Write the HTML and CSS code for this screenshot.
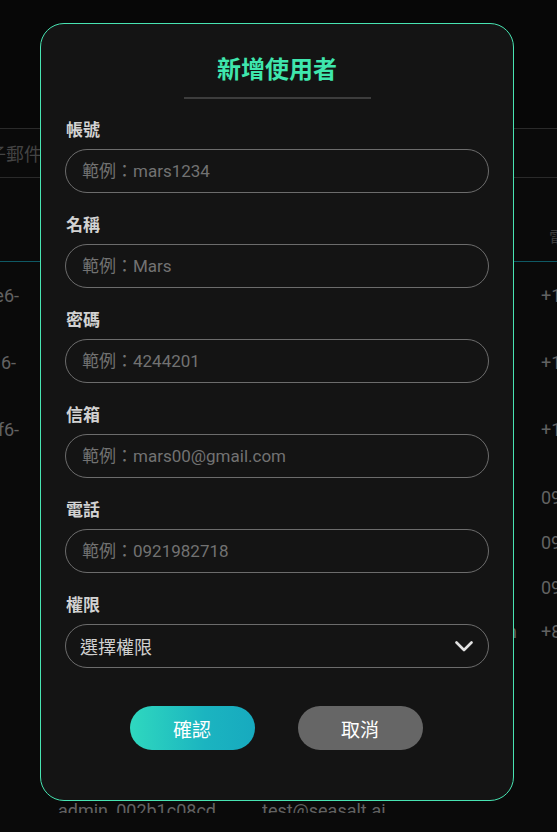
FILE: index.html
```html
<!DOCTYPE html>
<html lang="zh-Hant">
<head>
<meta charset="utf-8">
<title>新增使用者</title>
<link rel="stylesheet" href="styles.css">
</head>
<body>
<div class="page">
  <div class="topbar"></div>
  <div class="search"><span class="search-text">電子郵件</span></div>
  <div class="table">
    <div class="thead">
      <div class="cell"></div>
      <div class="cell">名稱</div>
      <div class="cell">電子郵件</div>
      <div class="cell phone-h">電話</div>
    </div>
    <div class="row tall"><div class="cell c1">e6-</div><div class="cell">mars</div><div class="cell">mars@seasalt.ai</div><div class="cell">+1 415 555 0199</div></div>
    <div class="row tall"><div class="cell c1 c1b">6-</div><div class="cell">demo</div><div class="cell">demo@seasalt.ai</div><div class="cell">+1 415 555 0123</div></div>
    <div class="row tall"><div class="cell c1">f6-</div><div class="cell">alice</div><div class="cell">alice@seasalt.ai</div><div class="cell">+1 415 555 0175</div></div>
    <div class="row r57"><div class="cell c1"></div><div class="cell">bob</div><div class="cell">bob@seasalt.ai</div><div class="cell">0912345678</div></div>
    <div class="row r45"><div class="cell c1"></div><div class="cell">carol</div><div class="cell">carol@seasalt.ai</div><div class="cell">0922334455</div></div>
    <div class="row r44"><div class="cell c1"></div><div class="cell">dave</div><div class="cell">dave@seasalt.ai</div><div class="cell">0933445566</div></div>
    <div class="row r45"><div class="cell c1"></div><div class="cell">admin</div><div class="cell end">admin</div><div class="cell">+886 912 345 678</div></div>
    <div class="row r45"><div class="cell c1"></div><div class="cell">eve</div><div class="cell">eve@seasalt.ai</div><div class="cell"></div></div>
    <div class="row r45"><div class="cell c1"></div><div class="cell">frank</div><div class="cell">frank@seasalt.ai</div><div class="cell"></div></div>
    <div class="row r44"><div class="cell c1"></div><div class="cell">grace</div><div class="cell">grace@seasalt.ai</div><div class="cell"></div></div>
    <div class="row r45"><div class="cell c1"></div><div class="cell">admin_002b1c08cd</div><div class="cell">test@seasalt.ai</div><div class="cell"></div></div>
  </div>
</div>

<div class="modal">
  <h2 class="modal-title">新增使用者</h2>
  <div class="title-rule"></div>

  <div class="field">
    <label class="label">帳號</label>
    <input class="input" type="text" placeholder="範例：mars1234">
  </div>
  <div class="field">
    <label class="label">名稱</label>
    <input class="input" type="text" placeholder="範例：Mars">
  </div>
  <div class="field">
    <label class="label">密碼</label>
    <input class="input" type="text" placeholder="範例：4244201">
  </div>
  <div class="field">
    <label class="label">信箱</label>
    <input class="input" type="text" placeholder="範例：mars00@gmail.com">
  </div>
  <div class="field">
    <label class="label">電話</label>
    <input class="input" type="text" placeholder="範例：0921982718">
  </div>
  <div class="field">
    <label class="label">權限</label>
    <div class="select">
      <span class="select-text">選擇權限</span>
      <svg class="chevron" width="18" height="11" viewBox="0 0 18 11"><path d="M1.5 1.5 L9 9 L16.5 1.5" fill="none" stroke="#e0e0e0" stroke-width="2.6" stroke-linecap="round" stroke-linejoin="round"/></svg>
    </div>
  </div>

  <div class="actions">
    <button class="btn btn-primary">確認</button>
    <button class="btn btn-cancel">取消</button>
  </div>
</div>
</body>
</html>
```
FILE: styles.css
```css
* { box-sizing: border-box; }
html, body {
  margin: 0;
  padding: 0;
  width: 557px;
  height: 832px;
  overflow: hidden;
  background: #0a0a0a;
  font-family: Roboto, "Noto Sans CJK TC", sans-serif;
}
.page {
  height: 813px;
  overflow: hidden;
  color: #626262;
  font-size: 18px;
}
.topbar {
  height: 129px;
  background: #070707;
}
.search {
  height: 50px;
  border-top: 1px solid #2a2a2a;
  border-bottom: 1px solid #2a2a2a;
  display: flex;
  align-items: center;
  margin-top: -1px;
}
.search-text {
  width: 42px;
  display: flex;
  justify-content: flex-end;
  white-space: nowrap;
  overflow: hidden;
  color: #444;
  font-size: 18px;
}
.table { display: flex; flex-direction: column; }
.thead, .row {
  display: grid;
  grid-template-columns: 58px 204px 279px 1fr;
  white-space: nowrap;
}
.thead {
  height: 84px;
  align-items: end;
  padding-bottom: 12px;
  border-bottom: 1px solid #0f5964;
  color: #3c3c3c;
  font-size: 17px;
}
.phone-h { padding-left: 8px; }
.cell { overflow: hidden; }
.c1 {
  display: flex;
  justify-content: flex-end;
  padding-right: 39px;
}
.c1b { padding-right: 42px; }
.end {
  display: flex;
  justify-content: flex-end;
  padding-right: 24px;
}
.row { align-items: center; }
.tall { height: 67px; }
.r57 { height: 57px; padding-top: 11px; }
.r45 { height: 45px; }
.r44 { height: 44px; }

.modal {
  position: absolute;
  left: 40px;
  top: 23px;
  width: 474px;
  height: 778px;
  background: #141414;
  border: 1px solid #48e4b2;
  border-radius: 24px;
  padding: 30px 24px 0;
  display: flex;
  flex-direction: column;
}
.modal-title {
  margin: 0;
  text-align: center;
  font-size: 24px;
  line-height: 32px;
  font-weight: 700;
  color: #3fe6ad;
}
.title-rule {
  width: 187px;
  height: 2px;
  background: #3d3d3d;
  margin: 11px auto 20px;
}
.field {
  display: flex;
  flex-direction: column;
  margin-bottom: 21px;
}
.label {
  font-size: 17px;
  line-height: 22px;
  font-weight: 700;
  color: #d2d2d2;
  margin-bottom: 8px;
  padding-left: 1px;
}
.input, .select {
  width: 100%;
  height: 44px;
  border: 1px solid #6c6c6c;
  border-radius: 22px;
  background: transparent;
  padding: 0 15px 0 16px;
  font-family: Roboto, "Noto Sans CJK TC", sans-serif;
  font-size: 17px;
  color: #d0d0d0;
  outline: none;
}
.input::placeholder { color: #727272; }
.select {
  display: flex;
  align-items: center;
  justify-content: space-between;
  padding-left: 14px;
}
.select-text { font-size: 18px; color: #cfcfcf; }
.chevron { display: block; }
.actions {
  margin-top: 17px;
  display: flex;
  justify-content: center;
  gap: 43px;
  padding-right: 2px;
}
.btn {
  width: 125px;
  height: 44px;
  border: none;
  border-radius: 22px;
  font-family: Roboto, "Noto Sans CJK TC", sans-serif;
  font-size: 19px;
  color: #ffffff;
  padding: 0;
}
.btn-primary { background: linear-gradient(90deg, #2fd8bf 0%, #1bb4c0 60%, #17aabf 100%); }
.btn-cancel { background: #666666; }
```
